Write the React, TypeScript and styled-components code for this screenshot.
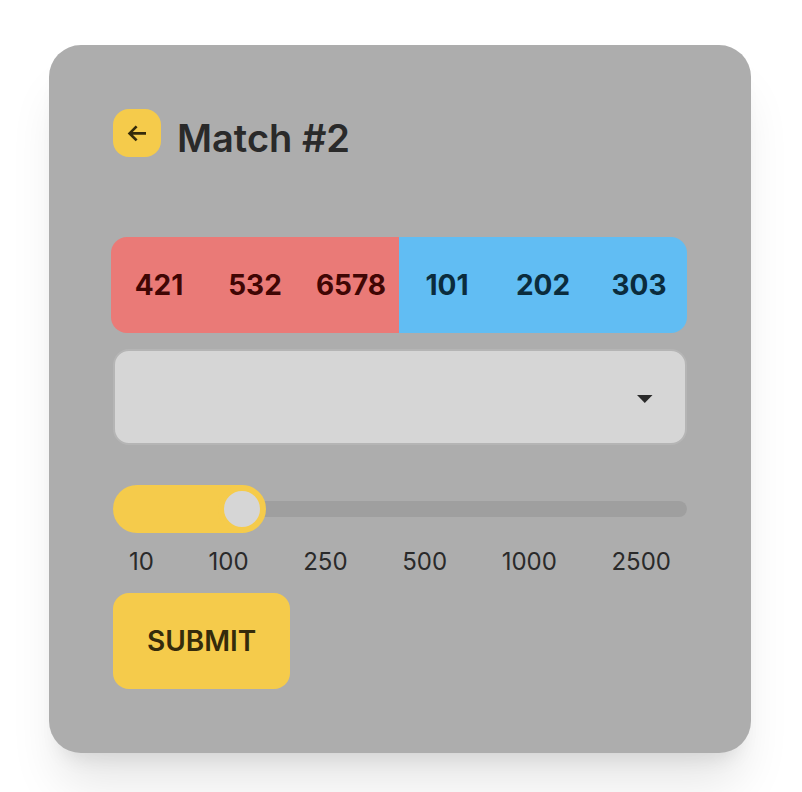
import React, { useState } from "react";
import styled, { createGlobalStyle } from "styled-components";

const GlobalStyle = createGlobalStyle`
  *, *::before, *::after { box-sizing: border-box; }
  body {
    margin: 0;
    background: #fff;
    color: #2a2a2a;
    font-family: Inter, "Liberation Sans", sans-serif;
  }
  button, input, select { font: inherit; }
`;

const Page = styled.main`
  padding: 45px 51px 39px 49px;
  overflow: hidden;
`;

const Card = styled.section`
  padding: 64px;
  border-radius: 32px;
  background: #adadad;
  box-shadow: 0 40px 50px -10px rgba(0, 0, 0, 0.1), 0 16px 20px -12px rgba(0, 0, 0, 0.1);
`;

const Header = styled.header`
  display: flex;
  align-items: flex-start;
  gap: 16px;
  margin-bottom: 70px;
`;

const Button = styled.button`
  border: 0;
  border-radius: 16px;
  background: #f5cb4b;
  color: #352b0b;
  cursor: pointer;
`;

const BackButton = styled(Button)`
  display: grid;
  place-items: center;
  width: 48px;
  height: 48px;
  padding: 0;
`;

const SubmitButton = styled(Button)`
  display: block;
  height: 96px;
  padding: 0 34px;
  font-size: 28px;
  font-weight: 600;
`;

const Title = styled.h1`
  margin: 0;
  font-size: 38px;
  line-height: 58px;
  font-weight: 600;
`;

const Alliances = styled.div`
  display: grid;
  grid-template-columns: 1fr 1fr;
  margin: 0 0 16px -2px;
  border-radius: 16px;
  overflow: hidden;
`;

const Alliance = styled.div<{ $side: "red" | "blue" }>`
  display: grid;
  grid-template-columns: repeat(3, minmax(0, 1fr));
  height: 96px;
  background: ${(p) => (p.$side === "red" ? "#ea7a77" : "#61bdf3")};
  color: ${(p) => (p.$side === "red" ? "#400604" : "#0b2c3d")};
`;

const Team = styled.span`
  display: flex;
  align-items: center;
  justify-content: center;
  font-size: 28px;
  font-weight: 700;
`;

const SelectField = styled.div`
  display: grid;
  align-items: center;
  margin-bottom: 40px;
  & > * { grid-area: 1 / 1; }
  & > svg { justify-self: end; margin-right: 34px; pointer-events: none; }
`;

const Select = styled.select`
  appearance: none;
  width: 100%;
  height: 96px;
  padding: 0 64px 0 32px;
  border: 2px solid #b5b5b5;
  border-radius: 16px;
  background: #d6d6d6;
  color: inherit;
  font-size: 28px;
`;

const Range = styled.input`
  appearance: none;
  display: block;
  width: 100%;
  height: 48px;
  margin: 0;
  border-radius: 24px;
  background: transparent;
  overflow: hidden;
  cursor: pointer;

  &::-webkit-slider-runnable-track {
    height: 16px;
    border-radius: 8px;
    background: #9f9f9f;
  }
  &::-webkit-slider-thumb {
    appearance: none;
    width: 48px;
    height: 48px;
    margin-top: -16px;
    border: 6px solid #f5cb4b;
    border-radius: 50%;
    background: #d6d6d6;
    box-shadow: -300px 0 0 276px #f5cb4b;
  }
`;

const Scale = styled.div`
  display: flex;
  justify-content: space-between;
  padding: 12px 16px 0;
  margin-bottom: 14px;
  font-size: 24px;
  line-height: 34px;
`;

const stops = [10, 100, 250, 500, 1000, 2500];

export default function App() {
  const [value, setValue] = useState(20);
  return (
    <>
      <GlobalStyle />
      <Page>
        <Card>
          <Header>
            <BackButton type="button" aria-label="Back">
              <svg width="20" height="18" viewBox="0 0 20 18" fill="none" stroke="currentColor" strokeWidth="2.7">
                <path d="M19 9.4H3M9.6 2.4L2.6 9.4L9.6 16.4" />
              </svg>
            </BackButton>
            <Title>Match #2</Title>
          </Header>
          <Alliances>
            <Alliance $side="red">
              {[421, 532, 6578].map((t) => <Team key={t}>{t}</Team>)}
            </Alliance>
            <Alliance $side="blue">
              {[101, 202, 303].map((t) => <Team key={t}>{t}</Team>)}
            </Alliance>
          </Alliances>
          <SelectField>
            <Select aria-label="Alliance" defaultValue="">
              <option value="" />
            </Select>
            <svg width="16" height="12" viewBox="0 0 16 12" fill="currentColor">
              <path d="M0 4H15.5L7.75 12Z" />
            </svg>
          </SelectField>
          <Range
            type="range"
            aria-label="Amount"
            min={0}
            max={100}
            value={value}
            onChange={(e) => setValue(Number(e.target.value))}
          />
          <Scale>
            {stops.map((s) => <span key={s}>{s}</span>)}
          </Scale>
          <SubmitButton type="submit">SUBMIT</SubmitButton>
        </Card>
      </Page>
    </>
  );
}
